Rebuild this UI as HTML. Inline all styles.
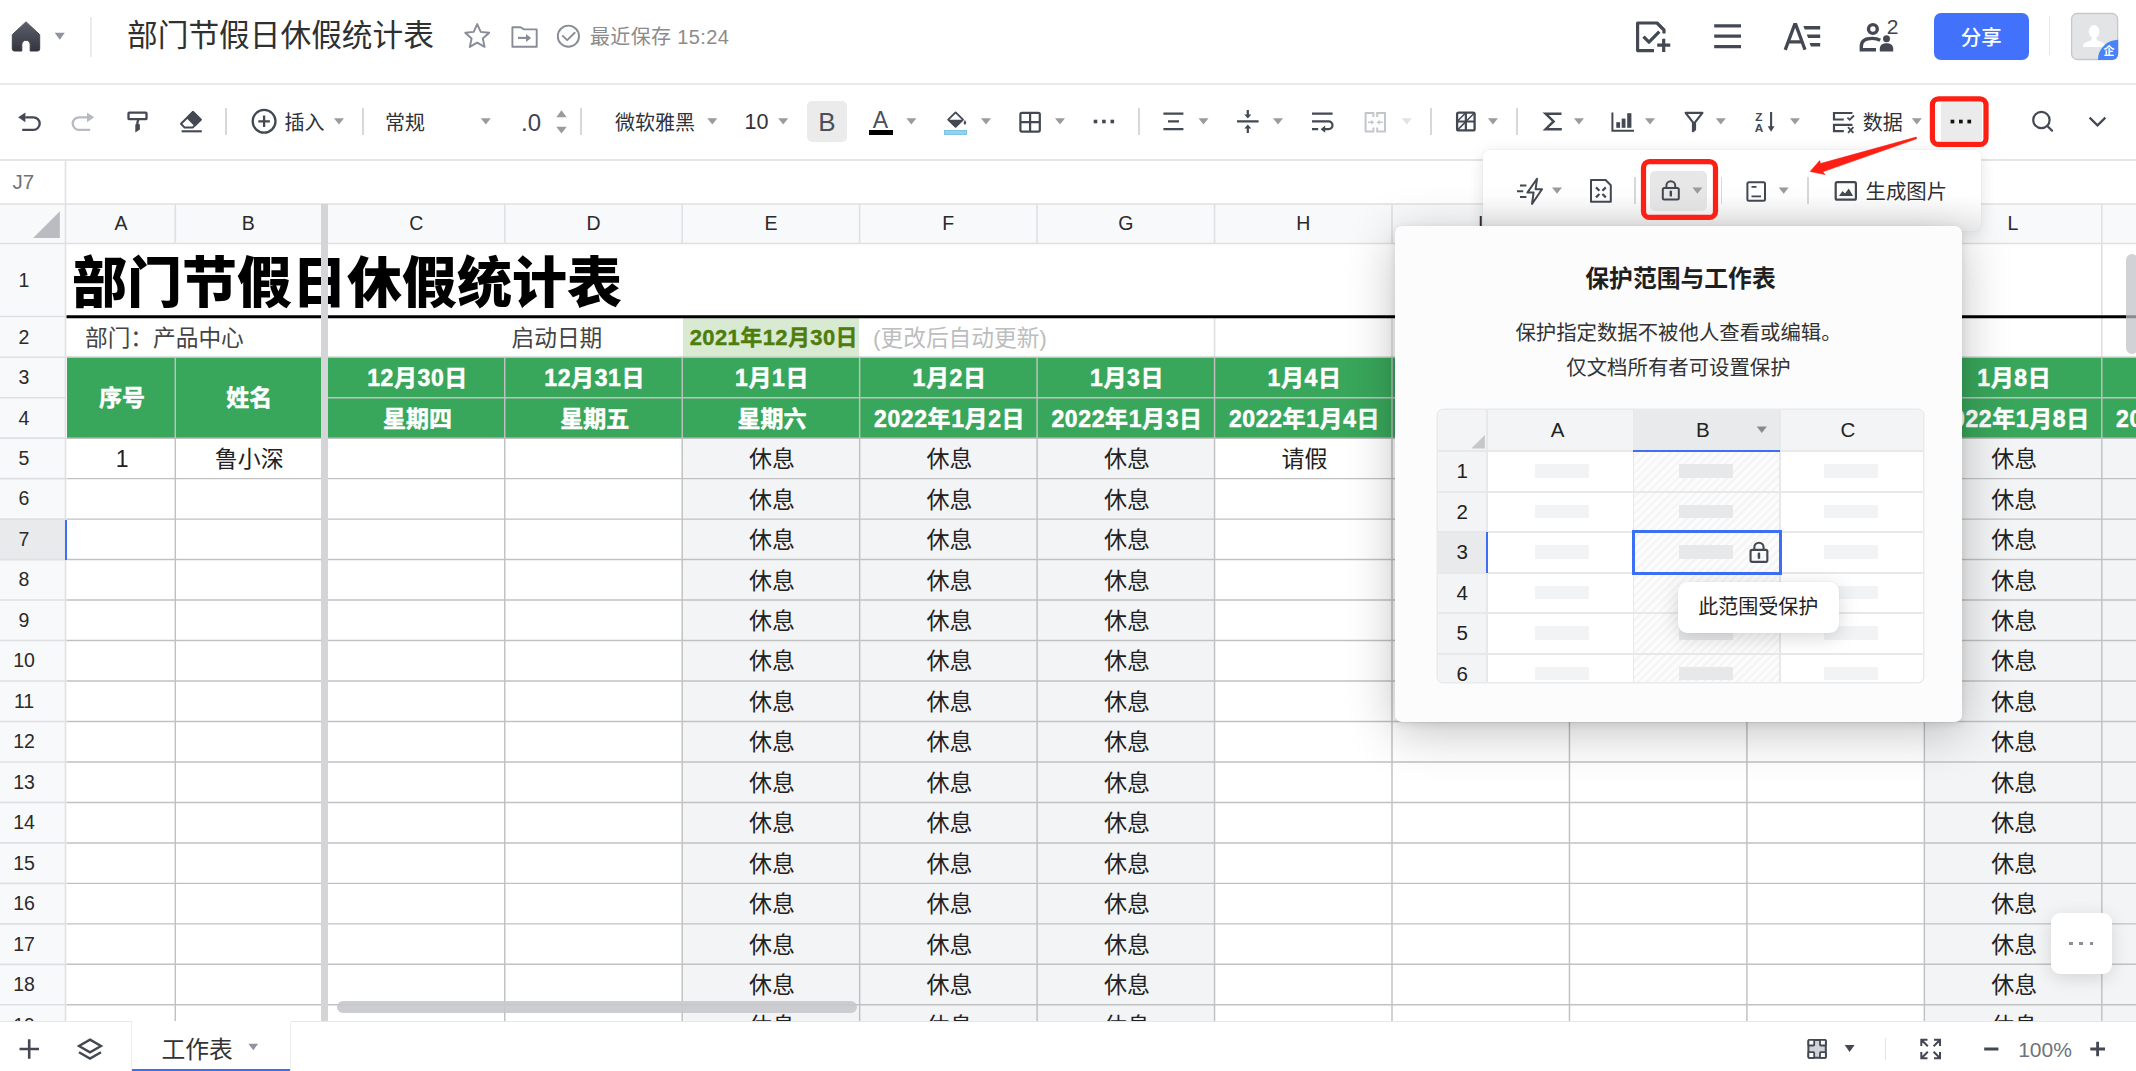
<!DOCTYPE html>
<html lang="zh-CN"><head><meta charset="utf-8"><title>部门节假日休假统计表</title>
<style>
html,body{margin:0;padding:0;background:#fff;}
body{width:2136px;height:1071px;overflow:hidden;position:relative;font-family:"Liberation Sans","Noto Sans CJK SC",sans-serif;}
.t{position:absolute;white-space:nowrap;overflow:visible;z-index:4;}
.b{position:absolute;}
svg{position:absolute;left:0;top:0;overflow:visible;}
.clip{overflow:hidden;}
</style></head><body>

<div id="sheet" class="b clip" style="left:0;top:161px;width:2136px;height:861px;z-index:0;">
<div class="b" style="left:0.0px;top:43.0px;width:2136.0px;height:39.5px;background:#f8f9fb;"></div>
<div class="b" style="left:0.0px;top:43.0px;width:65.5px;height:817.5px;background:#f8f9fb;"></div>
<div class="b" style="left:0.0px;top:358.1px;width:65.5px;height:40.5px;background:#e9eaec;"></div>
<div class="b" style="left:683.2px;top:157.0px;width:175.4px;height:38.7px;background:#d9ead3;"></div>
<div class="b" style="left:66.5px;top:196.2px;width:2070.5px;height:80.9px;background:#38a65b;"></div>
<div class="b" style="left:682.2px;top:277.1px;width:177.4px;height:583.4px;background:#f3f4f6;"></div>
<div class="b" style="left:859.6px;top:277.1px;width:177.4px;height:583.4px;background:#f3f4f6;"></div>
<div class="b" style="left:1037.1px;top:277.1px;width:177.5px;height:583.4px;background:#f3f4f6;"></div>
<div class="b" style="left:1924.3px;top:277.1px;width:177.5px;height:583.4px;background:#f3f4f6;"></div>
<div class="b" style="left:2101.8px;top:277.1px;width:177.4px;height:583.4px;background:#f3f4f6;"></div>
<svg width="2136" height="861"><path d="M0.00 43.00H2136.00M0.00 82.50H2136.00M0.00 155.50H65.50M0.00 196.20H65.50M0.00 236.68H65.50M0.00 277.15H65.50M0.00 317.62H65.50M0.00 358.10H65.50M0.00 398.58H65.50M0.00 439.05H65.50M0.00 479.52H65.50M0.00 520.00H65.50M0.00 560.48H65.50M0.00 600.95H65.50M0.00 641.42H65.50M0.00 681.90H65.50M0.00 722.38H65.50M0.00 762.85H65.50M0.00 803.33H65.50M0.00 843.80H65.50M0.00 884.28H65.50M65.50 0.00V860.50M175.30 43.00V82.50M504.75 43.00V82.50M682.20 43.00V82.50M859.65 43.00V82.50M1037.10 43.00V82.50M1214.55 43.00V82.50M1392.00 43.00V82.50M1569.45 43.00V82.50M1746.90 43.00V82.50M1924.35 43.00V82.50M2101.80 43.00V82.50M1214.55 156.50V196.20M1392.00 156.50V196.20M2101.80 156.50V196.20M2101.80 82.50V154.00" stroke="#dfe0e3" stroke-width="1.6" fill="none"/><path d="M66.50 196.20H2136.00M324.50 236.68H2136.00M66.50 277.15H2136.00M66.50 317.62H2136.00M66.50 358.10H2136.00M66.50 398.58H2136.00M66.50 439.05H2136.00M66.50 479.52H2136.00M66.50 520.00H2136.00M66.50 560.48H2136.00M66.50 600.95H2136.00M66.50 641.42H2136.00M66.50 681.90H2136.00M66.50 722.38H2136.00M66.50 762.85H2136.00M66.50 803.33H2136.00M66.50 843.80H2136.00M66.50 884.28H2136.00M175.30 196.20V860.50M504.75 196.20V860.50M682.20 196.20V860.50M859.65 196.20V860.50M1037.10 196.20V860.50M1214.55 196.20V860.50M1392.00 196.20V860.50M1569.45 196.20V860.50M1746.90 196.20V860.50M1924.35 196.20V860.50M2101.80 196.20V860.50" stroke="#c1c1c1" stroke-width="1.45" fill="none"/><path d="M66.5 155.70H2136" stroke="#000" stroke-width="3.1" fill="none"/></svg>
<div class="b" style="left:65.0px;top:359.1px;width:2.0px;height:39.5px;background:#3d6ff5;"></div>
<div class="t" style="left:66.5px;top:43.0px;width:108.8px;height:39.5px;line-height:39.5px;font-size:19.5px;color:#2a2a2a;font-weight:400;text-align:center;">A</div>
<div class="t" style="left:175.3px;top:43.0px;width:145.7px;height:39.5px;line-height:39.5px;font-size:19.5px;color:#2a2a2a;font-weight:400;text-align:center;">B</div>
<div class="t" style="left:328.0px;top:43.0px;width:176.8px;height:39.5px;line-height:39.5px;font-size:19.5px;color:#2a2a2a;font-weight:400;text-align:center;">C</div>
<div class="t" style="left:504.8px;top:43.0px;width:177.5px;height:39.5px;line-height:39.5px;font-size:19.5px;color:#2a2a2a;font-weight:400;text-align:center;">D</div>
<div class="t" style="left:682.2px;top:43.0px;width:177.4px;height:39.5px;line-height:39.5px;font-size:19.5px;color:#2a2a2a;font-weight:400;text-align:center;">E</div>
<div class="t" style="left:859.6px;top:43.0px;width:177.4px;height:39.5px;line-height:39.5px;font-size:19.5px;color:#2a2a2a;font-weight:400;text-align:center;">F</div>
<div class="t" style="left:1037.1px;top:43.0px;width:177.5px;height:39.5px;line-height:39.5px;font-size:19.5px;color:#2a2a2a;font-weight:400;text-align:center;">G</div>
<div class="t" style="left:1214.5px;top:43.0px;width:177.5px;height:39.5px;line-height:39.5px;font-size:19.5px;color:#2a2a2a;font-weight:400;text-align:center;">H</div>
<div class="t" style="left:1392.0px;top:43.0px;width:177.4px;height:39.5px;line-height:39.5px;font-size:19.5px;color:#2a2a2a;font-weight:400;text-align:center;">I</div>
<div class="t" style="left:1569.4px;top:43.0px;width:177.5px;height:39.5px;line-height:39.5px;font-size:19.5px;color:#2a2a2a;font-weight:400;text-align:center;">J</div>
<div class="t" style="left:1746.9px;top:43.0px;width:177.5px;height:39.5px;line-height:39.5px;font-size:19.5px;color:#2a2a2a;font-weight:400;text-align:center;">K</div>
<div class="t" style="left:1924.3px;top:43.0px;width:177.5px;height:39.5px;line-height:39.5px;font-size:19.5px;color:#2a2a2a;font-weight:400;text-align:center;">L</div>
<div class="t" style="left:2101.8px;top:43.0px;width:177.4px;height:39.5px;line-height:39.5px;font-size:19.5px;color:#2a2a2a;font-weight:400;text-align:center;">M</div>
<svg width="2136" height="861"><polygon points="33.1,76.9 59.9,76.9 59.9,50.19999999999999" fill="#b9bcc1"/></svg>
<div class="t" style="left:0.0px;top:83.0px;width:48.0px;height:73.0px;line-height:73.0px;font-size:19.5px;color:#2a2a2a;font-weight:400;text-align:center;padding-left:0;">1</div>
<div class="t" style="left:0.0px;top:156.0px;width:48.0px;height:40.7px;line-height:40.7px;font-size:19.5px;color:#2a2a2a;font-weight:400;text-align:center;padding-left:0;">2</div>
<div class="t" style="left:0.0px;top:196.0px;width:48.0px;height:40.5px;line-height:40.5px;font-size:19.5px;color:#2a2a2a;font-weight:400;text-align:center;padding-left:0;">3</div>
<div class="t" style="left:0.0px;top:236.5px;width:48.0px;height:40.5px;line-height:40.5px;font-size:19.5px;color:#2a2a2a;font-weight:400;text-align:center;padding-left:0;">4</div>
<div class="t" style="left:0.0px;top:276.9px;width:48.0px;height:40.5px;line-height:40.5px;font-size:19.5px;color:#2a2a2a;font-weight:400;text-align:center;padding-left:0;">5</div>
<div class="t" style="left:0.0px;top:317.4px;width:48.0px;height:40.5px;line-height:40.5px;font-size:19.5px;color:#2a2a2a;font-weight:400;text-align:center;padding-left:0;">6</div>
<div class="t" style="left:0.0px;top:357.9px;width:48.0px;height:40.5px;line-height:40.5px;font-size:19.5px;color:#2a2a2a;font-weight:400;text-align:center;padding-left:0;">7</div>
<div class="t" style="left:0.0px;top:398.4px;width:48.0px;height:40.5px;line-height:40.5px;font-size:19.5px;color:#2a2a2a;font-weight:400;text-align:center;padding-left:0;">8</div>
<div class="t" style="left:0.0px;top:438.8px;width:48.0px;height:40.5px;line-height:40.5px;font-size:19.5px;color:#2a2a2a;font-weight:400;text-align:center;padding-left:0;">9</div>
<div class="t" style="left:0.0px;top:479.3px;width:48.0px;height:40.5px;line-height:40.5px;font-size:19.5px;color:#2a2a2a;font-weight:400;text-align:center;padding-left:0;">10</div>
<div class="t" style="left:0.0px;top:519.8px;width:48.0px;height:40.5px;line-height:40.5px;font-size:19.5px;color:#2a2a2a;font-weight:400;text-align:center;padding-left:0;">11</div>
<div class="t" style="left:0.0px;top:560.3px;width:48.0px;height:40.5px;line-height:40.5px;font-size:19.5px;color:#2a2a2a;font-weight:400;text-align:center;padding-left:0;">12</div>
<div class="t" style="left:0.0px;top:600.8px;width:48.0px;height:40.5px;line-height:40.5px;font-size:19.5px;color:#2a2a2a;font-weight:400;text-align:center;padding-left:0;">13</div>
<div class="t" style="left:0.0px;top:641.2px;width:48.0px;height:40.5px;line-height:40.5px;font-size:19.5px;color:#2a2a2a;font-weight:400;text-align:center;padding-left:0;">14</div>
<div class="t" style="left:0.0px;top:681.7px;width:48.0px;height:40.5px;line-height:40.5px;font-size:19.5px;color:#2a2a2a;font-weight:400;text-align:center;padding-left:0;">15</div>
<div class="t" style="left:0.0px;top:722.2px;width:48.0px;height:40.5px;line-height:40.5px;font-size:19.5px;color:#2a2a2a;font-weight:400;text-align:center;padding-left:0;">16</div>
<div class="t" style="left:0.0px;top:762.6px;width:48.0px;height:40.5px;line-height:40.5px;font-size:19.5px;color:#2a2a2a;font-weight:400;text-align:center;padding-left:0;">17</div>
<div class="t" style="left:0.0px;top:803.1px;width:48.0px;height:40.5px;line-height:40.5px;font-size:19.5px;color:#2a2a2a;font-weight:400;text-align:center;padding-left:0;">18</div>
<div class="t" style="left:0.0px;top:843.6px;width:48.0px;height:40.5px;line-height:40.5px;font-size:19.5px;color:#2a2a2a;font-weight:400;text-align:center;padding-left:0;">19</div>
<div class="t" style="left:12.5px;top:-0.7px;width:60.0px;height:43.0px;line-height:43.0px;font-size:20.5px;color:#707275;font-weight:400;text-align:left;">J7</div>
<div class="t" style="left:72.0px;top:85.6px;width:1300.0px;height:72.0px;line-height:72.0px;font-size:55px;color:#000;font-weight:900;text-align:left;letter-spacing:0px;">部门节假日休假统计表</div>
<div class="t" style="left:85.0px;top:157.0px;width:300.0px;height:40.7px;line-height:40.7px;font-size:22.7px;color:#444;font-weight:400;text-align:left;">部门：产品中心</div>
<div class="t" style="left:504.8px;top:157.0px;width:97.5px;height:40.7px;line-height:40.7px;font-size:22.7px;color:#444;font-weight:400;text-align:right;">启动日期</div>
<div class="t" style="left:682.2px;top:157.3px;width:175.8px;height:40.7px;line-height:40.7px;font-size:22px;color:#4e7d0c;font-weight:700;text-align:right;-webkit-text-stroke:0.4px #4e7d0c;letter-spacing:0.4px;">2021年12月30日</div>
<div class="t" style="left:873.0px;top:157.0px;width:300.0px;height:40.7px;line-height:40.7px;font-size:22.7px;color:#bdbdbd;font-weight:400;text-align:left;">(更改后自动更新)</div>
<div class="t" style="left:67.7px;top:197.1px;width:108.8px;height:80.9px;line-height:80.9px;font-size:23px;color:#fff;font-weight:700;text-align:center;-webkit-text-stroke:0.5px #fff;">序号</div>
<div class="t" style="left:176.5px;top:197.1px;width:145.7px;height:80.9px;line-height:80.9px;font-size:23px;color:#fff;font-weight:700;text-align:center;-webkit-text-stroke:0.5px #fff;">姓名</div>
<div class="t" style="left:329.2px;top:197.1px;width:176.8px;height:40.5px;line-height:40.5px;font-size:23px;color:#fff;font-weight:700;text-align:center;-webkit-text-stroke:0.5px #fff;letter-spacing:0.6px;">12月30日</div>
<div class="t" style="left:329.2px;top:237.6px;width:176.8px;height:40.5px;line-height:40.5px;font-size:23px;color:#fff;font-weight:700;text-align:center;-webkit-text-stroke:0.5px #fff;">星期四</div>
<div class="t" style="left:505.9px;top:197.1px;width:177.5px;height:40.5px;line-height:40.5px;font-size:23px;color:#fff;font-weight:700;text-align:center;-webkit-text-stroke:0.5px #fff;letter-spacing:0.6px;">12月31日</div>
<div class="t" style="left:505.9px;top:237.6px;width:177.5px;height:40.5px;line-height:40.5px;font-size:23px;color:#fff;font-weight:700;text-align:center;-webkit-text-stroke:0.5px #fff;">星期五</div>
<div class="t" style="left:683.4px;top:197.1px;width:177.4px;height:40.5px;line-height:40.5px;font-size:23px;color:#fff;font-weight:700;text-align:center;-webkit-text-stroke:0.5px #fff;letter-spacing:0.6px;">1月1日</div>
<div class="t" style="left:683.4px;top:237.6px;width:177.4px;height:40.5px;line-height:40.5px;font-size:23px;color:#fff;font-weight:700;text-align:center;-webkit-text-stroke:0.5px #fff;">星期六</div>
<div class="t" style="left:860.9px;top:197.1px;width:177.4px;height:40.5px;line-height:40.5px;font-size:23px;color:#fff;font-weight:700;text-align:center;-webkit-text-stroke:0.5px #fff;letter-spacing:0.6px;">1月2日</div>
<div class="t" style="left:860.9px;top:237.6px;width:177.4px;height:40.5px;line-height:40.5px;font-size:23px;color:#fff;font-weight:700;text-align:center;-webkit-text-stroke:0.5px #fff;letter-spacing:0.6px;">2022年1月2日</div>
<div class="t" style="left:1038.3px;top:197.1px;width:177.5px;height:40.5px;line-height:40.5px;font-size:23px;color:#fff;font-weight:700;text-align:center;-webkit-text-stroke:0.5px #fff;letter-spacing:0.6px;">1月3日</div>
<div class="t" style="left:1038.3px;top:237.6px;width:177.5px;height:40.5px;line-height:40.5px;font-size:23px;color:#fff;font-weight:700;text-align:center;-webkit-text-stroke:0.5px #fff;letter-spacing:0.6px;">2022年1月3日</div>
<div class="t" style="left:1215.8px;top:197.1px;width:177.5px;height:40.5px;line-height:40.5px;font-size:23px;color:#fff;font-weight:700;text-align:center;-webkit-text-stroke:0.5px #fff;letter-spacing:0.6px;">1月4日</div>
<div class="t" style="left:1215.8px;top:237.6px;width:177.5px;height:40.5px;line-height:40.5px;font-size:23px;color:#fff;font-weight:700;text-align:center;-webkit-text-stroke:0.5px #fff;letter-spacing:0.6px;">2022年1月4日</div>
<div class="t" style="left:1393.2px;top:197.1px;width:177.4px;height:40.5px;line-height:40.5px;font-size:23px;color:#fff;font-weight:700;text-align:center;-webkit-text-stroke:0.5px #fff;letter-spacing:0.6px;">1月5日</div>
<div class="t" style="left:1393.2px;top:237.6px;width:177.4px;height:40.5px;line-height:40.5px;font-size:23px;color:#fff;font-weight:700;text-align:center;-webkit-text-stroke:0.5px #fff;letter-spacing:0.6px;">2022年1月5日</div>
<div class="t" style="left:1570.6px;top:197.1px;width:177.5px;height:40.5px;line-height:40.5px;font-size:23px;color:#fff;font-weight:700;text-align:center;-webkit-text-stroke:0.5px #fff;letter-spacing:0.6px;">1月6日</div>
<div class="t" style="left:1570.6px;top:237.6px;width:177.5px;height:40.5px;line-height:40.5px;font-size:23px;color:#fff;font-weight:700;text-align:center;-webkit-text-stroke:0.5px #fff;letter-spacing:0.6px;">2022年1月6日</div>
<div class="t" style="left:1748.1px;top:197.1px;width:177.5px;height:40.5px;line-height:40.5px;font-size:23px;color:#fff;font-weight:700;text-align:center;-webkit-text-stroke:0.5px #fff;letter-spacing:0.6px;">1月7日</div>
<div class="t" style="left:1748.1px;top:237.6px;width:177.5px;height:40.5px;line-height:40.5px;font-size:23px;color:#fff;font-weight:700;text-align:center;-webkit-text-stroke:0.5px #fff;letter-spacing:0.6px;">2022年1月7日</div>
<div class="t" style="left:1925.5px;top:197.1px;width:177.5px;height:40.5px;line-height:40.5px;font-size:23px;color:#fff;font-weight:700;text-align:center;-webkit-text-stroke:0.5px #fff;letter-spacing:0.6px;">1月8日</div>
<div class="t" style="left:1925.5px;top:237.6px;width:177.5px;height:40.5px;line-height:40.5px;font-size:23px;color:#fff;font-weight:700;text-align:center;-webkit-text-stroke:0.5px #fff;letter-spacing:0.6px;">2022年1月8日</div>
<div class="t" style="left:2103.0px;top:197.1px;width:177.4px;height:40.5px;line-height:40.5px;font-size:23px;color:#fff;font-weight:700;text-align:center;-webkit-text-stroke:0.5px #fff;letter-spacing:0.6px;">1月9日</div>
<div class="t" style="left:2103.0px;top:237.6px;width:177.4px;height:40.5px;line-height:40.5px;font-size:23px;color:#fff;font-weight:700;text-align:center;-webkit-text-stroke:0.5px #fff;letter-spacing:0.6px;">2022年1月9日</div>
<div class="t" style="left:67.7px;top:278.0px;width:108.8px;height:40.5px;line-height:40.5px;font-size:23px;color:#222;font-weight:400;text-align:center;">1</div>
<div class="t" style="left:176.5px;top:278.0px;width:145.7px;height:40.5px;line-height:40.5px;font-size:23px;color:#222;font-weight:400;text-align:center;">鲁小深</div>
<div class="t" style="left:1215.8px;top:278.0px;width:177.5px;height:40.5px;line-height:40.5px;font-size:23px;color:#222;font-weight:400;text-align:center;">请假</div>
<div class="t" style="left:683.4px;top:278.0px;width:177.4px;height:40.5px;line-height:40.5px;font-size:23px;color:#222;font-weight:400;text-align:center;">休息</div>
<div class="t" style="left:860.9px;top:278.0px;width:177.4px;height:40.5px;line-height:40.5px;font-size:23px;color:#222;font-weight:400;text-align:center;">休息</div>
<div class="t" style="left:1038.3px;top:278.0px;width:177.5px;height:40.5px;line-height:40.5px;font-size:23px;color:#222;font-weight:400;text-align:center;">休息</div>
<div class="t" style="left:1925.5px;top:278.0px;width:177.5px;height:40.5px;line-height:40.5px;font-size:23px;color:#222;font-weight:400;text-align:center;">休息</div>
<div class="t" style="left:683.4px;top:318.5px;width:177.4px;height:40.5px;line-height:40.5px;font-size:23px;color:#222;font-weight:400;text-align:center;">休息</div>
<div class="t" style="left:860.9px;top:318.5px;width:177.4px;height:40.5px;line-height:40.5px;font-size:23px;color:#222;font-weight:400;text-align:center;">休息</div>
<div class="t" style="left:1038.3px;top:318.5px;width:177.5px;height:40.5px;line-height:40.5px;font-size:23px;color:#222;font-weight:400;text-align:center;">休息</div>
<div class="t" style="left:1925.5px;top:318.5px;width:177.5px;height:40.5px;line-height:40.5px;font-size:23px;color:#222;font-weight:400;text-align:center;">休息</div>
<div class="t" style="left:683.4px;top:359.0px;width:177.4px;height:40.5px;line-height:40.5px;font-size:23px;color:#222;font-weight:400;text-align:center;">休息</div>
<div class="t" style="left:860.9px;top:359.0px;width:177.4px;height:40.5px;line-height:40.5px;font-size:23px;color:#222;font-weight:400;text-align:center;">休息</div>
<div class="t" style="left:1038.3px;top:359.0px;width:177.5px;height:40.5px;line-height:40.5px;font-size:23px;color:#222;font-weight:400;text-align:center;">休息</div>
<div class="t" style="left:1925.5px;top:359.0px;width:177.5px;height:40.5px;line-height:40.5px;font-size:23px;color:#222;font-weight:400;text-align:center;">休息</div>
<div class="t" style="left:683.4px;top:399.5px;width:177.4px;height:40.5px;line-height:40.5px;font-size:23px;color:#222;font-weight:400;text-align:center;">休息</div>
<div class="t" style="left:860.9px;top:399.5px;width:177.4px;height:40.5px;line-height:40.5px;font-size:23px;color:#222;font-weight:400;text-align:center;">休息</div>
<div class="t" style="left:1038.3px;top:399.5px;width:177.5px;height:40.5px;line-height:40.5px;font-size:23px;color:#222;font-weight:400;text-align:center;">休息</div>
<div class="t" style="left:1925.5px;top:399.5px;width:177.5px;height:40.5px;line-height:40.5px;font-size:23px;color:#222;font-weight:400;text-align:center;">休息</div>
<div class="t" style="left:683.4px;top:439.9px;width:177.4px;height:40.5px;line-height:40.5px;font-size:23px;color:#222;font-weight:400;text-align:center;">休息</div>
<div class="t" style="left:860.9px;top:439.9px;width:177.4px;height:40.5px;line-height:40.5px;font-size:23px;color:#222;font-weight:400;text-align:center;">休息</div>
<div class="t" style="left:1038.3px;top:439.9px;width:177.5px;height:40.5px;line-height:40.5px;font-size:23px;color:#222;font-weight:400;text-align:center;">休息</div>
<div class="t" style="left:1925.5px;top:439.9px;width:177.5px;height:40.5px;line-height:40.5px;font-size:23px;color:#222;font-weight:400;text-align:center;">休息</div>
<div class="t" style="left:683.4px;top:480.4px;width:177.4px;height:40.5px;line-height:40.5px;font-size:23px;color:#222;font-weight:400;text-align:center;">休息</div>
<div class="t" style="left:860.9px;top:480.4px;width:177.4px;height:40.5px;line-height:40.5px;font-size:23px;color:#222;font-weight:400;text-align:center;">休息</div>
<div class="t" style="left:1038.3px;top:480.4px;width:177.5px;height:40.5px;line-height:40.5px;font-size:23px;color:#222;font-weight:400;text-align:center;">休息</div>
<div class="t" style="left:1925.5px;top:480.4px;width:177.5px;height:40.5px;line-height:40.5px;font-size:23px;color:#222;font-weight:400;text-align:center;">休息</div>
<div class="t" style="left:683.4px;top:520.9px;width:177.4px;height:40.5px;line-height:40.5px;font-size:23px;color:#222;font-weight:400;text-align:center;">休息</div>
<div class="t" style="left:860.9px;top:520.9px;width:177.4px;height:40.5px;line-height:40.5px;font-size:23px;color:#222;font-weight:400;text-align:center;">休息</div>
<div class="t" style="left:1038.3px;top:520.9px;width:177.5px;height:40.5px;line-height:40.5px;font-size:23px;color:#222;font-weight:400;text-align:center;">休息</div>
<div class="t" style="left:1925.5px;top:520.9px;width:177.5px;height:40.5px;line-height:40.5px;font-size:23px;color:#222;font-weight:400;text-align:center;">休息</div>
<div class="t" style="left:683.4px;top:561.4px;width:177.4px;height:40.5px;line-height:40.5px;font-size:23px;color:#222;font-weight:400;text-align:center;">休息</div>
<div class="t" style="left:860.9px;top:561.4px;width:177.4px;height:40.5px;line-height:40.5px;font-size:23px;color:#222;font-weight:400;text-align:center;">休息</div>
<div class="t" style="left:1038.3px;top:561.4px;width:177.5px;height:40.5px;line-height:40.5px;font-size:23px;color:#222;font-weight:400;text-align:center;">休息</div>
<div class="t" style="left:1925.5px;top:561.4px;width:177.5px;height:40.5px;line-height:40.5px;font-size:23px;color:#222;font-weight:400;text-align:center;">休息</div>
<div class="t" style="left:683.4px;top:601.9px;width:177.4px;height:40.5px;line-height:40.5px;font-size:23px;color:#222;font-weight:400;text-align:center;">休息</div>
<div class="t" style="left:860.9px;top:601.9px;width:177.4px;height:40.5px;line-height:40.5px;font-size:23px;color:#222;font-weight:400;text-align:center;">休息</div>
<div class="t" style="left:1038.3px;top:601.9px;width:177.5px;height:40.5px;line-height:40.5px;font-size:23px;color:#222;font-weight:400;text-align:center;">休息</div>
<div class="t" style="left:1925.5px;top:601.9px;width:177.5px;height:40.5px;line-height:40.5px;font-size:23px;color:#222;font-weight:400;text-align:center;">休息</div>
<div class="t" style="left:683.4px;top:642.3px;width:177.4px;height:40.5px;line-height:40.5px;font-size:23px;color:#222;font-weight:400;text-align:center;">休息</div>
<div class="t" style="left:860.9px;top:642.3px;width:177.4px;height:40.5px;line-height:40.5px;font-size:23px;color:#222;font-weight:400;text-align:center;">休息</div>
<div class="t" style="left:1038.3px;top:642.3px;width:177.5px;height:40.5px;line-height:40.5px;font-size:23px;color:#222;font-weight:400;text-align:center;">休息</div>
<div class="t" style="left:1925.5px;top:642.3px;width:177.5px;height:40.5px;line-height:40.5px;font-size:23px;color:#222;font-weight:400;text-align:center;">休息</div>
<div class="t" style="left:683.4px;top:682.8px;width:177.4px;height:40.5px;line-height:40.5px;font-size:23px;color:#222;font-weight:400;text-align:center;">休息</div>
<div class="t" style="left:860.9px;top:682.8px;width:177.4px;height:40.5px;line-height:40.5px;font-size:23px;color:#222;font-weight:400;text-align:center;">休息</div>
<div class="t" style="left:1038.3px;top:682.8px;width:177.5px;height:40.5px;line-height:40.5px;font-size:23px;color:#222;font-weight:400;text-align:center;">休息</div>
<div class="t" style="left:1925.5px;top:682.8px;width:177.5px;height:40.5px;line-height:40.5px;font-size:23px;color:#222;font-weight:400;text-align:center;">休息</div>
<div class="t" style="left:683.4px;top:723.3px;width:177.4px;height:40.5px;line-height:40.5px;font-size:23px;color:#222;font-weight:400;text-align:center;">休息</div>
<div class="t" style="left:860.9px;top:723.3px;width:177.4px;height:40.5px;line-height:40.5px;font-size:23px;color:#222;font-weight:400;text-align:center;">休息</div>
<div class="t" style="left:1038.3px;top:723.3px;width:177.5px;height:40.5px;line-height:40.5px;font-size:23px;color:#222;font-weight:400;text-align:center;">休息</div>
<div class="t" style="left:1925.5px;top:723.3px;width:177.5px;height:40.5px;line-height:40.5px;font-size:23px;color:#222;font-weight:400;text-align:center;">休息</div>
<div class="t" style="left:683.4px;top:763.7px;width:177.4px;height:40.5px;line-height:40.5px;font-size:23px;color:#222;font-weight:400;text-align:center;">休息</div>
<div class="t" style="left:860.9px;top:763.7px;width:177.4px;height:40.5px;line-height:40.5px;font-size:23px;color:#222;font-weight:400;text-align:center;">休息</div>
<div class="t" style="left:1038.3px;top:763.7px;width:177.5px;height:40.5px;line-height:40.5px;font-size:23px;color:#222;font-weight:400;text-align:center;">休息</div>
<div class="t" style="left:1925.5px;top:763.7px;width:177.5px;height:40.5px;line-height:40.5px;font-size:23px;color:#222;font-weight:400;text-align:center;">休息</div>
<div class="t" style="left:683.4px;top:804.2px;width:177.4px;height:40.5px;line-height:40.5px;font-size:23px;color:#222;font-weight:400;text-align:center;">休息</div>
<div class="t" style="left:860.9px;top:804.2px;width:177.4px;height:40.5px;line-height:40.5px;font-size:23px;color:#222;font-weight:400;text-align:center;">休息</div>
<div class="t" style="left:1038.3px;top:804.2px;width:177.5px;height:40.5px;line-height:40.5px;font-size:23px;color:#222;font-weight:400;text-align:center;">休息</div>
<div class="t" style="left:1925.5px;top:804.2px;width:177.5px;height:40.5px;line-height:40.5px;font-size:23px;color:#222;font-weight:400;text-align:center;">休息</div>
<div class="t" style="left:683.4px;top:844.7px;width:177.4px;height:40.5px;line-height:40.5px;font-size:23px;color:#222;font-weight:400;text-align:center;">休息</div>
<div class="t" style="left:860.9px;top:844.7px;width:177.4px;height:40.5px;line-height:40.5px;font-size:23px;color:#222;font-weight:400;text-align:center;">休息</div>
<div class="t" style="left:1038.3px;top:844.7px;width:177.5px;height:40.5px;line-height:40.5px;font-size:23px;color:#222;font-weight:400;text-align:center;">休息</div>
<div class="t" style="left:1925.5px;top:844.7px;width:177.5px;height:40.5px;line-height:40.5px;font-size:23px;color:#222;font-weight:400;text-align:center;">休息</div>
<div class="b" style="left:321.0px;top:43.0px;width:7.0px;height:817.5px;background:#d5d5d7;z-index:5;"></div>
<div class="b" style="left:337.0px;top:840.0px;width:520.0px;height:11.5px;background:rgba(200,201,205,.92);border-radius:6px;z-index:5;"></div>
<div class="b" style="left:2125.5px;top:92.5px;width:12.0px;height:100.0px;background:rgba(190,192,198,.72);border-radius:6px;z-index:5;"></div>
<div class="b" style="left:2050.5px;top:752.0px;width:61.0px;height:61.0px;background:#fff;border-radius:9px;box-shadow:0 4px 18px rgba(0,0,0,.13);z-index:5;"></div>
<div class="b" style="left:2069.0px;top:780.7px;width:3.6px;height:3.6px;background:#8a8f9a;z-index:6;"></div>
<div class="b" style="left:2079.4px;top:780.7px;width:3.6px;height:3.6px;background:#8a8f9a;z-index:6;"></div>
<div class="b" style="left:2089.8px;top:780.7px;width:3.6px;height:3.6px;background:#8a8f9a;z-index:6;"></div>
</div>
<div class="b" style="left:0.0px;top:82.5px;width:2136.0px;height:2.0px;background:#e9eaec;"></div>
<div class="b" style="left:0.0px;top:158.7px;width:2136.0px;height:2.0px;background:#e4e5e8;"></div>
<div class="t" style="left:127.0px;top:12.3px;width:400.0px;height:48.0px;line-height:48.0px;font-size:30.7px;color:#303030;font-weight:400;text-align:left;">部门节假日休假统计表</div>
<div class="t" style="left:590.0px;top:14.0px;width:200.0px;height:46.0px;line-height:46.0px;font-size:20px;color:#8b8b8b;font-weight:400;text-align:left;letter-spacing:0.35px;">最近保存 15:24</div>
<div class="b" style="left:1934.0px;top:13.0px;width:94.5px;height:46.7px;background:#4272fb;border-radius:7px;"></div>
<div class="t" style="left:1934.0px;top:14.5px;width:94.5px;height:46.7px;line-height:46.7px;font-size:20.5px;color:#fff;font-weight:500;text-align:center;">分享</div>
<div class="t" style="left:1883.5px;top:14.0px;width:18.0px;height:26.0px;line-height:26.0px;font-size:21px;color:#40444f;font-weight:300;text-align:center;">2</div>
<div class="b" style="left:90.0px;top:16.5px;width:1.6px;height:40.0px;background:#ebebed;"></div>
<div class="b" style="left:2048.5px;top:16.3px;width:1.6px;height:39.0px;background:#e6e6e8;"></div>
<div class="t" style="left:2103.5px;top:45.2px;width:11.0px;height:13.0px;line-height:13.0px;font-size:11px;color:#fff;font-weight:700;text-align:center;">企</div>
<div class="b" style="left:225.3px;top:108.3px;width:1.8px;height:26.4px;background:#d7d8da;"></div>
<div class="b" style="left:362.4px;top:108.3px;width:1.8px;height:26.4px;background:#d7d8da;"></div>
<div class="b" style="left:580.4px;top:108.3px;width:1.8px;height:26.4px;background:#d7d8da;"></div>
<div class="b" style="left:1137.8px;top:108.3px;width:1.8px;height:26.4px;background:#d7d8da;"></div>
<div class="b" style="left:1430.3px;top:108.3px;width:1.8px;height:26.4px;background:#d7d8da;"></div>
<div class="b" style="left:1516.3px;top:108.3px;width:1.8px;height:26.4px;background:#d7d8da;"></div>
<div class="t" style="left:284.5px;top:107.8px;width:60.0px;height:31.0px;line-height:31.0px;font-size:20px;color:#2f3238;font-weight:400;text-align:left;">插入</div>
<div class="t" style="left:385.0px;top:107.8px;width:60.0px;height:31.0px;line-height:31.0px;font-size:20px;color:#2f3238;font-weight:400;text-align:left;">常规</div>
<div class="t" style="left:521.0px;top:107.0px;width:30.0px;height:31.0px;line-height:31.0px;font-size:24px;color:#40444f;font-weight:400;text-align:left;">.0</div>
<div class="t" style="left:615.0px;top:107.8px;width:100.0px;height:31.0px;line-height:31.0px;font-size:20px;color:#2f3238;font-weight:400;text-align:left;">微软雅黑</div>
<div class="t" style="left:744.5px;top:107.0px;width:40.0px;height:31.0px;line-height:31.0px;font-size:21.5px;color:#2f3238;font-weight:400;text-align:left;">10</div>
<div class="b" style="left:806.8px;top:101.2px;width:40.2px;height:40.5px;background:#ebebeb;border-radius:5px;"></div>
<div class="t" style="left:806.8px;top:102.0px;width:40.2px;height:41.5px;line-height:41.5px;font-size:26px;color:#4a4f5c;font-weight:400;text-align:center;">B</div>
<div class="t" style="left:866.0px;top:103.5px;width:29.0px;height:32.0px;line-height:32.0px;font-size:23px;color:#4a4f5c;font-weight:400;text-align:center;">A</div>
<div class="b" style="left:869.0px;top:130.0px;width:24.0px;height:5.0px;background:#000;"></div>
<div class="b" style="left:943.5px;top:130.0px;width:23.5px;height:5.0px;background:#92d2ee;box-shadow:inset 0 0 0 1px #7fc3e3;"></div>
<div class="t" style="left:1862.8px;top:107.8px;width:60.0px;height:31.0px;line-height:31.0px;font-size:20px;color:#2f3238;font-weight:400;text-align:left;">数据</div>
<div class="b" style="left:1940.8px;top:102.0px;width:40.8px;height:39.0px;background:#ebebeb;"></div>
<svg width="2136" height="1071" style="z-index:3"><defs><linearGradient id="hg" x1="0" y1="0" x2="0" y2="1"><stop offset="0" stop-color="#5d616d"/><stop offset="1" stop-color="#33353d"/></linearGradient><clipPath id="avc"><rect x="2071" y="12.9" width="47.2" height="47.2" rx="6"/></clipPath></defs>
<path d="M26 21.8 L39.7 34.6 V48.8 a2.2 2.2 0 0 1 -2.2 2.2 H30.2 V44.5 a4.2 4.2 0 0 0 -8.4 0 V51 H14.5 a2.2 2.2 0 0 1 -2.2 -2.2 V34.6 Z" fill="url(#hg)" stroke="url(#hg)" stroke-width="1" stroke-linejoin="round"/>
<polygon points="54.7,32.8 64.8,32.8 59.75,39.7" fill="#8f949e"/>
<polygon points="477.2,24.1 480.7,31.9 489.2,32.8 482.8,38.5 484.6,46.9 477.2,42.6 469.8,46.9 471.6,38.5 465.2,32.8 473.7,31.9" fill="none" stroke="#878c97" stroke-width="1.9" stroke-linejoin="round"/>
<g fill="none" stroke="#878c97" stroke-width="1.9" stroke-linejoin="round" stroke-linecap="round"><path d="M512.4 27.3 H520.6 L524 29.4 H536.7 V46.7 H512.4 Z"/><path d="M518 37.9 H527" stroke-width="2.1" stroke-linecap="butt"/></g><polygon points="526,33.9 531.2,37.9 526,41.9" fill="#878c97"/>
<g fill="none" stroke="#878c97" stroke-width="1.9" stroke-linejoin="round" stroke-linecap="round"><circle cx="568.4" cy="36.2" r="10.6"/><path d="M562.7 35.9 L567.2 40.1 L574.7 32.8"/></g>
<g fill="none" stroke="#434853" stroke-width="3.2" stroke-linejoin="round" stroke-linecap="butt"><path d="M1654 50.6 H1637.6 V23 H1657 L1664 30 V33.5"/><path d="M1643.5 36.6 L1649 42.2 L1659.3 31.6"/><path d="M1657.2 45.2 H1670.3 M1663.7 38.8 V52"/></g>
<path d="M1714.2 25.8 H1741 M1714.2 36.2 H1741 M1714.2 46.6 H1741" stroke="#434853" stroke-width="3.2" fill="none"/>
<g fill="none" stroke="#434853" stroke-width="3.3" stroke-linejoin="miter"><path d="M1785.2 49.8 L1794.6 24.6 H1795.8 L1805 49.8 M1789 41.8 H1801.4"/></g>
<path d="M1803.4 26.1 H1820.2 V29.5 H1804.7 Z M1806.8 34.5 H1820.2 V37.9 H1808.1 Z M1809.6 43 H1820.2 V46.4 H1810.9 Z" fill="#434853"/>
<g fill="none" stroke="#434853" stroke-width="3.4"><circle cx="1872.9" cy="29" r="4.4"/><path d="M1876 49.8 H1861.3 V46.4 C1861.3 40.8 1866 38.4 1872.4 38.4 C1875.4 38.4 1878 39 1880.2 40.2"/></g>
<circle cx="1886.5" cy="38.8" r="3.5" fill="#434853"/><path d="M1879.8 51.6 V48.6 a5.4 5.4 0 0 1 5.4 -5.4 h2.6 a5.4 5.4 0 0 1 5.4 5.4 V51.6 Z" fill="#434853"/>
<rect x="2071.6" y="13.5" width="46" height="46" rx="5.5" fill="#e3e4e6" stroke="#c6c7ca" stroke-width="1.3"/>
<g clip-path="url(#avc)"><ellipse cx="2094.1" cy="31.6" rx="5.3" ry="6.5" fill="#fff"/><path d="M2083.2 47 V45 Q2083.2 43.5 2085 42.8 L2091 40.2 Q2092 39.6 2092 37 H2096.2 Q2096.2 39.6 2097.2 40.2 L2103 42.8 Q2104.8 43.5 2104.8 45 V47 Z" fill="#fff"/><circle cx="2118.2" cy="60" r="20.3" fill="#4a82f8"/></g>
<g fill="none" stroke="#434853" stroke-width="2.3" stroke-linejoin="round"><path d="M25.2 117.3 H33.4 a6.3 6.3 0 0 1 0 12.6 H22.2"/></g><polygon points="18.2,117.3 25.4,112.4 25.4,122.2" fill="#434853"/>
<g fill="none" stroke="#b7bac2" stroke-width="2.3" stroke-linejoin="round"><path d="M87.2 117.3 H79.0 a6.3 6.3 0 0 0 0 12.6 H90.2"/></g><polygon points="94.2,117.3 87.0,112.4 87.0,122.2" fill="#b7bac2"/>
<g fill="none" stroke="#434853" stroke-width="2.3" stroke-linejoin="round"><rect x="128.5" y="112.6" width="18" height="6.6" rx="0.8"/><path d="M138.4 119.5 Q137 122 137.4 125"/></g><path d="M135.3 125 Q135.3 124 136.3 124 H138.9 Q139.9 124 139.9 125 V129.4 L135.3 132.6 Z" fill="#434853"/>
<g stroke="#434853" stroke-width="2" stroke-linejoin="round"><path d="M193 112 L200.8 119.6 L192.6 127.6 H184.6 L181 123.8 Z" fill="none"/><path d="M193 112 L200.8 119.6 L195 125.4 L187.4 117.6 Z" fill="#434853"/><path d="M181.6 131.3 H201.8" fill="none" stroke-width="2.1"/></g>
<g fill="none" stroke="#434853" stroke-width="2.3"><circle cx="264.1" cy="121.3" r="11.4"/><path d="M258.3 121.3 H269.9 M264.1 115.5 V127.1"/></g>
<polygon points="334.0,118.3 344.0,118.3 339.0,124.5" fill="#9b9b9b"/>
<polygon points="480.8,118.3 490.8,118.3 485.8,124.5" fill="#9b9b9b"/>
<polygon points="556.3,117.3 566.7,117.3 561.5,110.2" fill="#9b9b9b"/><polygon points="556.3,126.8 566.7,126.8 561.5,133.4" fill="#9b9b9b"/>
<polygon points="707.3,118.3 717.3,118.3 712.3,124.5" fill="#9b9b9b"/>
<polygon points="778.2,118.3 788.2,118.3 783.2,124.5" fill="#9b9b9b"/>
<polygon points="906.4,118.3 916.4,118.3 911.4,124.5" fill="#9b9b9b"/>
<g stroke="#434853" stroke-width="1.9" stroke-linejoin="round"><path d="M955.6 112.4 L963 119.6 L955.6 126.6 L948.2 119.6 Z" fill="none"/><path d="M949.4 120.6 H961.8 L955.6 126.6 Z" fill="#434853"/></g><path d="M964.9 120.6 q1.9 2.8 0 3.9 q-1.9 -1.1 0 -3.9 Z" fill="#434853" stroke="#434853" stroke-width="0.7"/>
<polygon points="981.0,118.3 991.0,118.3 986.0,124.5" fill="#9b9b9b"/>
<g fill="none" stroke="#434853" stroke-width="2.2"><rect x="1020.4" y="112.8" width="19.4" height="18.8" rx="1.5"/><path d="M1030.1 112.8 V131.6 M1020.4 122.2 H1039.8"/></g>
<polygon points="1055.0,118.3 1065.0,118.3 1060.0,124.5" fill="#9b9b9b"/>
<rect x="1093.7" y="119.7" width="3.6" height="3.6" fill="#434853"/>
<rect x="1102.1" y="119.7" width="3.6" height="3.6" fill="#434853"/>
<rect x="1110.5" y="119.7" width="3.6" height="3.6" fill="#434853"/>
<path d="M1163.4 113.7 H1183.4 M1168 121.4 H1179 M1163.4 129.1 H1183.4" stroke="#434853" stroke-width="2.2" fill="none"/>
<polygon points="1198.5,118.3 1208.5,118.3 1203.5,124.5" fill="#9b9b9b"/>
<g stroke="#434853" stroke-width="2.2" fill="none"><path d="M1237 121.4 H1258.6 M1247.8 110 V116 M1247.8 127 V133"/></g><polygon points="1244.3,114.6 1251.3,114.6 1247.8,118.6" fill="#434853"/><polygon points="1244.3,128.4 1251.3,128.4 1247.8,124.4" fill="#434853"/>
<polygon points="1273.0,118.3 1283.0,118.3 1278.0,124.5" fill="#9b9b9b"/>
<g stroke="#434853" stroke-width="2.2" fill="none" stroke-linejoin="round"><path d="M1312 113.7 H1332.6 M1312 129.2 H1318.2 M1312 121.4 H1328.6 a3.9 3.9 0 0 1 0 7.8 H1324"/></g><polygon points="1320.6,129.2 1325.2,125.6 1325.2,132.8" fill="#434853"/>
<g stroke="#c3c6cd" stroke-width="2" fill="none"><path d="M1373.4 117 V113 H1365.6 V131.6 H1373.4 V127.4 M1377.2 117 V113 H1385 V131.6 H1377.2 V127.4"/><path d="M1368 122.3 H1372.4 M1382.8 122.3 H1378.4" stroke-width="1.5"/></g><polygon points="1371.2,119.8 1374.2,122.3 1371.2,124.8" fill="#c3c6cd"/><polygon points="1379.6,119.8 1376.6,122.3 1379.6,124.8" fill="#c3c6cd"/>
<polygon points="1401.8,118.3 1411.8,118.3 1406.8,124.5" fill="#e2e2e2"/>
<g fill="none" stroke="#434853" stroke-linejoin="round"><rect x="1457.1" y="112.7" width="17.5" height="17.7" rx="1.5" stroke-width="2.3"/><path d="M1465.85 112.7 V130.4 M1457.1 121.5 H1474.6" stroke-width="2.2"/><path d="M1457.6 121 L1465.3 113.2 M1466.4 121 L1474.1 113.2 M1457.6 129.9 L1465.3 122.1" stroke-width="1.5"/></g>
<polygon points="1487.9,118.3 1497.9,118.3 1492.9,124.5" fill="#9b9b9b"/>
<path d="M1561.5 113.7 H1545.6 L1553.6 121.4 L1545.6 129.2 H1561.8" stroke="#434853" stroke-width="2.5" fill="none" stroke-linejoin="miter"/>
<polygon points="1574.0,118.3 1584.0,118.3 1579.0,124.5" fill="#9b9b9b"/>
<path d="M1612.4 112.5 V130.8 H1634" stroke="#434853" stroke-width="2" fill="none"/><rect x="1616.3" y="122.2" width="3.8" height="5.6" fill="#434853"/><rect x="1621.7" y="118.6" width="3.8" height="9.2" fill="#434853"/><rect x="1627.2" y="113.2" width="4.2" height="14.6" fill="#434853"/>
<polygon points="1645.0,118.3 1655.0,118.3 1650.0,124.5" fill="#9b9b9b"/>
<path d="M1685.6 112.9 H1702.4 L1695 122.4 V129.5 L1693 131.2 V122.4 Z" stroke="#434853" stroke-width="2.2" fill="none" stroke-linejoin="round"/>
<polygon points="1715.8,118.3 1725.8,118.3 1720.8,124.5" fill="#9b9b9b"/>
<text x="1758.9" y="121.3" font-family='"Liberation Sans",sans-serif' font-weight="700" font-size="11.8" text-anchor="middle" fill="#434853">Z</text><text x="1758.9" y="131.8" font-family='"Liberation Sans",sans-serif' font-weight="700" font-size="11.8" text-anchor="middle" fill="#434853">A</text><path d="M1771.1 112 V128" stroke="#434853" stroke-width="2.1"/><polygon points="1767.7,126.2 1774.5,126.2 1771.1,131.7" fill="#434853"/>
<polygon points="1790.0,118.3 1800.0,118.3 1795.0,124.5" fill="#9b9b9b"/>
<g stroke="#434853" stroke-width="2.2" fill="none"><path d="M1852.4 113 H1834 V119.5 H1843.8 M1852.4 124.8 H1834 V131.1 H1843.8"/><path d="M1847.4 117.6 L1849.7 119.7 L1854 115.5 M1848 127.2 L1853.4 132.8 M1853.4 127.2 L1848 132.8" stroke-width="1.8"/></g>
<polygon points="1911.8,118.3 1921.8,118.3 1916.8,124.5" fill="#9b9b9b"/>
<rect x="1950.6" y="119.7" width="3.7" height="3.7" fill="#111"/>
<rect x="1959.0" y="119.7" width="3.7" height="3.7" fill="#111"/>
<rect x="1967.4" y="119.7" width="3.7" height="3.7" fill="#111"/>
<g stroke="#434853" stroke-width="2.2" fill="none" stroke-linecap="round"><circle cx="2041.4" cy="120" r="8.2"/><path d="M2047.6 126.2 L2052 130.6"/><path d="M2089.6 117.6 L2097.5 125.4 L2105.4 117.6" stroke-linecap="butt"/></g></svg>
<div class="b" style="left:0.0px;top:1021.5px;width:2136.0px;height:49.5px;background:#fff;"></div>
<div class="b" style="left:0.0px;top:1020.7px;width:2136.0px;height:1.8px;background:#e6e7ea;"></div>
<div class="b" style="left:132.0px;top:1020.5px;width:158.5px;height:3.0px;background:#fff;"></div>
<div class="b" style="left:131.0px;top:1021.5px;width:1.4px;height:50.0px;background:#eceded;"></div>
<div class="b" style="left:290.0px;top:1021.5px;width:1.4px;height:50.0px;background:#eceded;"></div>
<div class="b" style="left:132.4px;top:1068.8px;width:157.6px;height:2.4px;background:#3d6ff5;"></div>
<div class="t" style="left:161.5px;top:1030.8px;width:80.0px;height:38.0px;line-height:38.0px;font-size:23.8px;color:#333;font-weight:400;text-align:left;">工作表</div>
<div class="b" style="left:1884.6px;top:1038.0px;width:1.6px;height:21.6px;background:#e3e4e6;"></div>
<div class="t" style="left:2018.0px;top:1034.0px;width:54.0px;height:32.0px;line-height:32.0px;font-size:21px;color:#6f737b;font-weight:400;text-align:center;">100%</div>
<svg width="2136" height="1071" style="z-index:3"><polygon points="248.4,1043.8 258.2,1043.8 253.3,1050.2" fill="#8f949e"/>
<path d="M19.5 1049 H39 M29.2 1039.3 V1058.7" stroke="#434853" stroke-width="2.6" fill="none"/>
<g stroke="#434853" stroke-width="2.4" fill="none" stroke-linejoin="miter"><path d="M90 1039.6 L101 1046 L90 1052.4 L79 1046 Z"/><path d="M79 1052.2 L90 1058.6 L101 1052.2"/></g>
<rect x="1808.4" y="1039.9" width="17.4" height="17.9" rx="1.6" fill="#d0d2d7" stroke="#434853" stroke-width="2"/>
<rect x="1808.4" y="1039.9" width="5.8" height="5.6" fill="#fff" stroke="#434853" stroke-width="1.8" rx="0.8"/>
<rect x="1820.0" y="1039.9" width="5.8" height="5.6" fill="#fff" stroke="#434853" stroke-width="1.8" rx="0.8"/>
<rect x="1808.4" y="1052.2" width="5.8" height="5.6" fill="#fff" stroke="#434853" stroke-width="1.8" rx="0.8"/>
<rect x="1820.0" y="1052.2" width="5.8" height="5.6" fill="#fff" stroke="#434853" stroke-width="1.8" rx="0.8"/>
<polygon points="1844.7,1045 1854.6,1045 1849.6,1052" fill="#434853"/>
<g stroke="#434853" stroke-width="2" fill="none"><path d="M1921.3 1046 V1039.8 H1927.5 M1921.8 1040.3 L1927.8 1046.3 M1934 1039.8 H1940 V1046 M1939.6 1040.3 L1933.6 1046.3 M1921.3 1052 V1058.2 H1927.5 M1921.8 1057.8 L1927.8 1051.8 M1934 1058.2 H1940 V1052 M1939.6 1057.8 L1933.6 1051.8"/></g>
<path d="M1984.2 1049 H1998.4 M2090.3 1049 H2105 M2097.6 1041.7 V1056.3" stroke="#434853" stroke-width="2.8" fill="none"/></svg>
<div class="b" style="left:0;top:0;width:0;height:0;z-index:5;">
<div class="b" style="left:1483.0px;top:150.3px;width:498.0px;height:80.8px;background:#fff;border-radius:7px;box-shadow:0 3px 16px rgba(0,0,0,.12),0 0 2px rgba(0,0,0,.07);"></div>
<div class="b" style="left:1483.0px;top:196.0px;width:498.0px;height:35.0px;background:linear-gradient(to bottom,rgba(0,0,0,0),rgba(0,0,0,.07));border-radius:0 0 7px 7px;"></div>
<div class="b" style="left:1649.9px;top:170.6px;width:57.4px;height:40.0px;background:#e7e7e7;border-radius:5px;"></div>
<div class="b" style="left:1634.4px;top:177.3px;width:1.8px;height:26.8px;background:#d7d8da;"></div>
<div class="b" style="left:1720.7px;top:177.3px;width:1.8px;height:26.8px;background:#d7d8da;"></div>
<div class="b" style="left:1807.0px;top:177.3px;width:1.8px;height:26.8px;background:#d7d8da;"></div>
<div class="t" style="left:1865.6px;top:176.8px;width:100.0px;height:31.0px;line-height:31.0px;font-size:20.4px;color:#2f3238;font-weight:400;text-align:left;">生成图片</div>
<svg width="2136" height="1071" style="z-index:5"><g stroke="#434853" stroke-width="2" fill="none" stroke-linejoin="round"><path d="M1537 178.8 L1527.4 192.6 H1533.6 L1532 204 L1542 189.2 H1535.6 Z"/><path d="M1520 185.4 H1526.4 M1517 191.2 H1523.2 M1520 197 H1526.4"/></g>
<polygon points="1552.0,187.6 1562.0,187.6 1557.0,193.8" fill="#9b9b9b"/>
<g stroke="#434853" stroke-width="2" fill="none" stroke-linejoin="round"><path d="M1591 180 H1605.6 L1610.8 185.2 V201.8 H1591 Z"/><path d="M1596 187.4 L1599.4 190.8 M1605.8 187.4 L1602.4 190.8 M1596 197.4 L1599.4 194 M1605.8 197.4 L1602.4 194" stroke-width="2.2"/></g>
<g transform="translate(1661.8,180) scale(1.0)" stroke="#434853" fill="none" stroke-width="2"><rect x="1" y="8" width="16" height="11.4" rx="1.5"/><path d="M4.6 8 V5.6 a4.4 4.4 0 0 1 8.8 0 V8"/><path d="M9 11.6 V15.4" stroke-width="2.4" stroke-linecap="round"/></g>
<polygon points="1692.4,187.6 1702.4,187.6 1697.4,193.8" fill="#9b9b9b"/>
<g stroke="#434853" stroke-width="2" fill="none"><rect x="1747.4" y="182.2" width="17.6" height="18.6" rx="1.5"/><path d="M1751.5 186.8 H1756.5 M1751.5 196.4 H1761" stroke-width="1.8"/></g>
<polygon points="1778.7,187.6 1788.7,187.6 1783.7,193.8" fill="#9b9b9b"/>
<g stroke="#434853" stroke-width="2.2" fill="none"><rect x="1835.7" y="182.2" width="20.2" height="17.5" rx="1.5"/></g><path d="M1839 196 L1842.6 191 L1845 193.6 L1848.8 188.6 L1853 196 Z" fill="#434853"/></svg>
</div>
<div class="b" style="left:1395.0px;top:226.2px;width:567.0px;height:495.6px;background:#fcfcfc;border-radius:7px;box-shadow:0 10px 50px rgba(0,0,0,.24),0 2px 8px rgba(0,0,0,.10);z-index:6;"></div>
<div class="b" style="left:1395px;top:226.2px;width:567px;height:495.6px;z-index:7;">
<div class="t" style="left:2.0px;top:35.8px;width:567.0px;height:34.0px;line-height:34.0px;font-size:23.8px;color:#1f1f1f;font-weight:700;text-align:center;">保护范围与工作表</div>
<div class="t" style="left:0.0px;top:89.8px;width:567.0px;height:35.5px;line-height:35.5px;font-size:20.4px;color:#333;font-weight:400;text-align:center;">保护指定数据不被他人查看或编辑。</div>
<div class="t" style="left:0.0px;top:125.3px;width:567.0px;height:35.5px;line-height:35.5px;font-size:20.4px;color:#333;font-weight:400;text-align:center;">仅文档所有者可设置保护</div>
<div class="b clip" style="left:42.5px;top:184.3px;width:485.5px;height:271.5px;border-radius:5px;background:#fff;box-shadow:0 0 0 1.5px #e9eaec;">
<div class="b" style="left:0.0px;top:0.0px;width:500.0px;height:40.9px;background:#f3f4f6;"></div>
<div class="b" style="left:0.0px;top:0.0px;width:49.2px;height:300.0px;background:#f3f4f6;"></div>
<div class="b" style="left:195.9px;top:0.0px;width:146.3px;height:40.9px;background:#e9eaec;"></div>
<div class="b" style="left:0.0px;top:121.9px;width:49.2px;height:40.6px;background:#e9eaec;"></div>
<div class="b" style="left:195.9px;top:40.9px;width:146.3px;height:300.0px;background:repeating-linear-gradient(135deg,#fcfcfc 0,#fcfcfc 3.4px,#f5f5f5 3.4px,#f5f5f5 5.8px);"></div>
<div class="b" style="left:0.0px;top:40.0px;width:500.0px;height:1.8px;background:#e8e8ea;"></div>
<div class="b" style="left:0.0px;top:80.6px;width:500.0px;height:1.8px;background:#e8e8ea;"></div>
<div class="b" style="left:0.0px;top:121.0px;width:500.0px;height:1.8px;background:#e8e8ea;"></div>
<div class="b" style="left:0.0px;top:161.6px;width:500.0px;height:1.8px;background:#e8e8ea;"></div>
<div class="b" style="left:0.0px;top:202.0px;width:500.0px;height:1.8px;background:#e8e8ea;"></div>
<div class="b" style="left:0.0px;top:242.6px;width:500.0px;height:1.8px;background:#e8e8ea;"></div>
<div class="b" style="left:0.0px;top:283.2px;width:500.0px;height:1.8px;background:#e8e8ea;"></div>
<div class="b" style="left:48.3px;top:0.0px;width:1.8px;height:300.0px;background:#e8e8ea;"></div>
<div class="b" style="left:195.0px;top:0.0px;width:1.8px;height:300.0px;background:#e8e8ea;"></div>
<div class="b" style="left:341.3px;top:0.0px;width:1.8px;height:300.0px;background:#e8e8ea;"></div>
<div class="b" style="left:195.9px;top:39.7px;width:146.3px;height:2.2px;background:#3d6ff5;"></div>
<div class="b" style="left:48.2px;top:121.9px;width:2.2px;height:40.6px;background:#3d6ff5;"></div>
<div class="b" style="left:97.3px;top:53.8px;width:54.2px;height:13.6px;background:#f2f3f4;"></div>
<div class="b" style="left:241.0px;top:53.8px;width:54.5px;height:13.6px;background:#e7e8ea;"></div>
<div class="b" style="left:386.5px;top:53.8px;width:54.0px;height:13.6px;background:#f2f3f4;"></div>
<div class="t" style="left:0.0px;top:40.7px;width:49.2px;height:40.6px;line-height:40.6px;font-size:20.5px;color:#222;font-weight:400;text-align:center;">1</div>
<div class="b" style="left:97.3px;top:94.3px;width:54.2px;height:13.6px;background:#f2f3f4;"></div>
<div class="b" style="left:241.0px;top:94.3px;width:54.5px;height:13.6px;background:#e7e8ea;"></div>
<div class="b" style="left:386.5px;top:94.3px;width:54.0px;height:13.6px;background:#f2f3f4;"></div>
<div class="t" style="left:0.0px;top:81.3px;width:49.2px;height:40.4px;line-height:40.4px;font-size:20.5px;color:#222;font-weight:400;text-align:center;">2</div>
<div class="b" style="left:97.3px;top:134.8px;width:54.2px;height:13.6px;background:#f2f3f4;"></div>
<div class="b" style="left:241.0px;top:134.8px;width:54.5px;height:13.6px;background:#e7e8ea;"></div>
<div class="b" style="left:386.5px;top:134.8px;width:54.0px;height:13.6px;background:#f2f3f4;"></div>
<div class="t" style="left:0.0px;top:121.7px;width:49.2px;height:40.6px;line-height:40.6px;font-size:20.5px;color:#222;font-weight:400;text-align:center;">3</div>
<div class="b" style="left:97.3px;top:175.3px;width:54.2px;height:13.6px;background:#f2f3f4;"></div>
<div class="b" style="left:241.0px;top:175.3px;width:54.5px;height:13.6px;background:#e7e8ea;"></div>
<div class="b" style="left:386.5px;top:175.3px;width:54.0px;height:13.6px;background:#f2f3f4;"></div>
<div class="t" style="left:0.0px;top:162.3px;width:49.2px;height:40.4px;line-height:40.4px;font-size:20.5px;color:#222;font-weight:400;text-align:center;">4</div>
<div class="b" style="left:97.3px;top:215.8px;width:54.2px;height:13.6px;background:#f2f3f4;"></div>
<div class="b" style="left:241.0px;top:215.8px;width:54.5px;height:13.6px;background:#e7e8ea;"></div>
<div class="b" style="left:386.5px;top:215.8px;width:54.0px;height:13.6px;background:#f2f3f4;"></div>
<div class="t" style="left:0.0px;top:202.7px;width:49.2px;height:40.6px;line-height:40.6px;font-size:20.5px;color:#222;font-weight:400;text-align:center;">5</div>
<div class="b" style="left:97.3px;top:256.4px;width:54.2px;height:13.6px;background:#f2f3f4;"></div>
<div class="b" style="left:241.0px;top:256.4px;width:54.5px;height:13.6px;background:#e7e8ea;"></div>
<div class="b" style="left:386.5px;top:256.4px;width:54.0px;height:13.6px;background:#f2f3f4;"></div>
<div class="t" style="left:0.0px;top:243.3px;width:49.2px;height:40.6px;line-height:40.6px;font-size:20.5px;color:#222;font-weight:400;text-align:center;">6</div>
<div class="t" style="left:90.1px;top:0.0px;width:60.0px;height:40.9px;line-height:40.9px;font-size:20.5px;color:#222;font-weight:400;text-align:center;">A</div>
<div class="t" style="left:235.4px;top:0.0px;width:60.0px;height:40.9px;line-height:40.9px;font-size:20.5px;color:#222;font-weight:400;text-align:center;">B</div>
<div class="t" style="left:380.5px;top:0.0px;width:60.0px;height:40.9px;line-height:40.9px;font-size:20.5px;color:#222;font-weight:400;text-align:center;">C</div>
<div class="b" style="left:194.2px;top:119.8px;width:150.0px;height:45.0px;background:transparent;border:3px solid #3d6ff5;box-sizing:border-box;"></div>
<svg width="500" height="300"><polygon points="33.3,38.4 46.9,38.4 46.9,25.0" fill="#c6c7c9"/><polygon points="318.7,16.5 328.9,16.5 323.8,23.0" fill="#8a8a8a"/><g transform="translate(311.5,131.5) scale(1.05)" stroke="#434853" fill="none" stroke-width="2"><rect x="1" y="8" width="16" height="11.4" rx="1.5"/><path d="M4.6 8 V5.6 a4.4 4.4 0 0 1 8.8 0 V8"/><path d="M9 11.6 V15.4" stroke-width="2.4" stroke-linecap="round"/></g></svg>
</div>
<div class="b" style="left:283.0px;top:356.3px;width:160.5px;height:50.3px;background:#fff;border-radius:9px;box-shadow:0 4px 20px rgba(0,0,0,.16),0 0 2px rgba(0,0,0,.06);"></div>
<div class="t" style="left:283.0px;top:356.3px;width:160.5px;height:50.3px;line-height:50.3px;font-size:20px;color:#222;font-weight:400;text-align:center;">此范围受保护</div>
</div>
<svg width="2136" height="1071" style="z-index:9"><rect x="1932.4" y="98.9" width="53.6" height="45.5" rx="6" fill="none" stroke="#fd1f14" stroke-width="5.2"/>
<rect x="1643.5" y="161.6" width="72" height="55.8" rx="6" fill="none" stroke="#fd1f14" stroke-width="5.2"/>
<path d="M1916.3 137.1 L1820.4 163.6 L1819.7 160.6 L1810.1 171.5 L1825 174.6 L1822.7 171.8 L1916.6 138.7 Z" fill="#fd1f14" stroke="#fd1f14" stroke-width="0.6" stroke-linejoin="round"/></svg>
</body></html>
